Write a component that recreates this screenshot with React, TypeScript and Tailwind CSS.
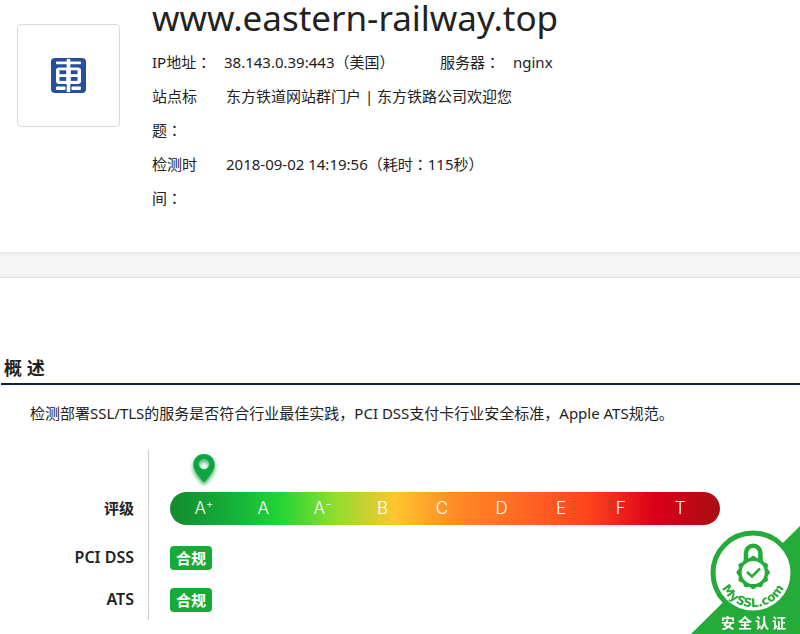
import type { ReactNode } from "react";

const grades: { letter: string; mark?: string }[] = [
  { letter: "A", mark: "+" },
  { letter: "A" },
  { letter: "A", mark: "−" },
  { letter: "B" },
  { letter: "C" },
  { letter: "D" },
  { letter: "E" },
  { letter: "F" },
  { letter: "T" },
];

// Full-width colon set in the middle of its cell.
function Colon() {
  return <span className="font-['Noto_Sans_CJK_TC',sans-serif]">：</span>;
}

function InfoRow({ label, children }: { label: string; children: ReactNode }) {
  return (
    <div className="flex">
      <dt className="w-[54px] shrink-0">
        {label}
        <Colon />
      </dt>
      <dd className="ml-5">{children}</dd>
    </div>
  );
}

function SiteLogo() {
  return (
    <svg viewBox="0 0 35 35" className="size-[35px]" role="img" aria-label="logo">
      <rect width="35" height="35" rx="4" fill="#264f9b" />
      <g fill="#fff">
        <rect x="5" y="3.5" width="25" height="2.800" rx="0.8" />
        <rect x="5" y="9.500" width="25" height="16.500" rx="3" />
        <rect x="5" y="28.500" width="9.500" height="3.500" rx="1" />
        <rect x="20.500" y="28.500" width="9.500" height="3.500" rx="1" />
        <rect x="15.700" y="1" width="3.600" height="33" />
      </g>
      <g fill="#264f9b">
        <rect x="8.500" y="12.300" width="6.700" height="3.900" />
        <rect x="19.800" y="12.300" width="6.700" height="3.900" />
        <rect x="8.500" y="19" width="6.700" height="3.900" />
        <rect x="19.800" y="19" width="6.700" height="3.900" />
      </g>
    </svg>
  );
}

function Pin() {
  return (
    <svg viewBox="0 0 36 38" className="h-[38px] w-[36px]" aria-hidden="true">
      <defs>
        <filter id="pin-glow" x="-50%" y="-50%" width="200%" height="200%">
          <feDropShadow dx="0" dy="2.500" stdDeviation="2" floodColor="#0a9b3c" floodOpacity="0.9" />
        </filter>
      </defs>
      <path
        filter="url(#pin-glow)"
        fillRule="evenodd"
        fill="#0ba53f"
        d="M18 4C12 4 7.400 8.600 7.400 14.500C7.400 20.500 13 26.500 18 32.500C23 26.500 28.600 20.500 28.600 14.500C28.600 8.600 24 4 18 4zM18 8.700a5.300 5.300 0 1 1 0 10.600a5.300 5.300 0 1 1 0-10.600z"
      />
    </svg>
  );
}

function gearPath(cx: number, cy: number, r: number, depth: number, teeth: number) {
  const points: string[] = [];
  for (let i = 0; i < 120; i++) {
    const a = (i / 120) * Math.PI * 2 - Math.PI / 2;
    const d = r + depth * Math.cos(a * teeth);
    points.push(`${(cx + d * Math.cos(a)).toFixed(2)} ${(cy + d * Math.sin(a)).toFixed(2)}`);
  }
  return `M${points.join("L")}Z`;
}

function Seal() {
  return (
    <svg viewBox="0 0 110 110" className="size-[110px]" role="img" aria-label="MySSL.com 安全认证">
      <path d="M110 2V110H1z" fill="#24ab39" />
      <circle cx="63" cy="49" r="40" fill="#fff" stroke="#24ab39" strokeWidth="5" />
      <path d="M56 36V29a7.200 7.200 0 0 1 14.400 0V36" fill="none" stroke="#24ab39" strokeWidth="4.500" />
      <path d={gearPath(63.2, 48.5, 15.8, 0.9, 12)} fill="#24ab39" />
      <circle cx="63.200" cy="48.500" r="11.600" fill="#fff" />
      <path d="M57 48l5 4.500l8-8" fill="none" stroke="#24ab39" strokeWidth="2.500" />
      <path id="seal-arc" d="M29.500 55A34 34 0 0 0 96.500 55" fill="none" />
      <text fill="#24ab39" className="font-['DejaVu_Sans',sans-serif] text-[12px] font-bold">
        <textPath href="#seal-arc" startOffset="50%" textAnchor="middle">
          MySSL.com
        </textPath>
      </text>
      <text
        x="31"
        y="104"
        fill="#fff"
        className="font-['Noto_Sans_CJK_SC',sans-serif] text-[14px] font-bold tracking-[3px]"
      >
        安全认证
      </text>
    </svg>
  );
}

function Passed() {
  return (
    <span className="rounded bg-[#15ab36] px-1.5 text-[15px] leading-6 font-bold text-white">合规</span>
  );
}

export default function App() {
  return (
    <div className="relative bg-white font-['Noto_Sans','Noto_Sans_CJK_SC',sans-serif] text-[15px] text-[#222]">
      <header className="flex h-[252px] gap-8 pl-[17px]">
        <div className="mt-6 flex size-[103px] shrink-0 items-center justify-center rounded border border-[#d9d9d9]">
          <SiteLogo />
        </div>
        <div>
          <h1 className="h-[45px] text-[35px] leading-9">www.eastern-railway.top</h1>
          <dl className="leading-[34px]">
            <div className="flex">
              <div className="flex w-[288px]">
                <dt className="w-[72px] shrink-0">
                  IP地址
                  <Colon />
                </dt>
                <dd>38.143.0.39:443（美国）</dd>
              </div>
              <dt className="w-[73px]">
                服务器
                <Colon />
              </dt>
              <dd>nginx</dd>
            </div>
            <InfoRow label="站点标题">东方铁道网站群门户 | 东方铁路公司欢迎您</InfoRow>
            <InfoRow label="检测时间">
              2018-09-02 14:19:56（耗时
              <Colon />
              115秒）
            </InfoRow>
          </dl>
        </div>
      </header>

      <div className="h-[26px] border-y border-[#e4e4e4] bg-[linear-gradient(#ececec,#f6f6f6_5px,#f6f6f6_19px,#efefef)]" />

      <main className="pt-[76px]">
        <h2 className="ml-px border-b-2 border-[#0a1f56] pb-px pl-[3px] text-[18px] leading-7 font-bold">
          概 述
        </h2>
        <p className="mt-4 pl-[30px] leading-6">
          检测部署SSL/TLS的服务是否符合行业最佳实践，PCI DSS支付卡行业安全标准，Apple ATS规范。
        </p>

        <div className="mt-[25px] flex">
          <div className="w-[149px] border-r border-[#ccc] pt-[42px] pr-3.5 pb-1 text-right text-[15px] leading-[33px] font-semibold">
            <div>评级</div>
            <div className="mt-4 text-base leading-[33px]">PCI DSS</div>
            <div className="mt-[9px] text-base leading-[33px]">ATS</div>
          </div>
          <div className="ml-[21px] w-[550px]">
            <div className="flex h-[42px] items-start pl-4">
              <Pin />
            </div>
            <div className="grid h-[33px] grid-cols-9 rounded-full bg-[linear-gradient(90deg,#128a2f_0%,#16b33a_12%,#24d436_20%,#8ede30_30%,#ffc62e_41%,#ff8e27_51%,#ff6522_65%,#ff431d_76%,#dc0019_88%,#a80e12_100%)] pr-2.5 pl-1 text-center font-['Inter',sans-serif] text-[17px] leading-[33px] font-light text-white">
              {grades.map((grade, i) => (
                <span key={i}>
                  {grade.letter}
                  {grade.mark && <sup className="-top-1.5 text-[11px]">{grade.mark}</sup>}
                </span>
              ))}
            </div>
            <div className="mt-4 flex h-[33px] items-center">
              <Passed />
            </div>
            <div className="mt-[9px] flex h-[33px] items-center">
              <Passed />
            </div>
          </div>
        </div>
      </main>

      <div className="fixed right-0 bottom-0">
        <Seal />
      </div>
    </div>
  );
}
